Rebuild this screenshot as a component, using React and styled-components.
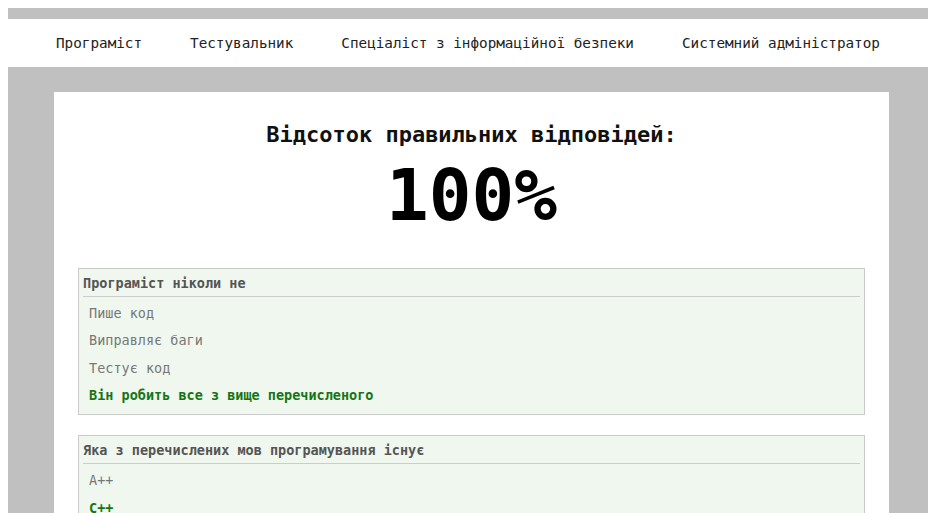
import React from 'react';
import styled, { createGlobalStyle } from 'styled-components';

const GlobalStyle = createGlobalStyle`
  body {
    margin: 8px 0 0 8px;
    background: #fff;
    font-family: "DejaVu Sans Mono", "Liberation Mono", monospace;
  }
`;

const Header = styled("header")`
  border-top: 11px solid #c0c0c0;
`;

const Nav = styled("nav")`
  height: 48px;
  display: flex;
  align-items: center;
  justify-content: space-evenly;
  background: #fff;
`;

const NavLink = styled("a")`
  font-size: 14.3px;
  color: #222;
  text-decoration: none;
  cursor: pointer;
`;

const Main = styled("main")`
  background: #c0c0c0;
  min-height: 460px;
  padding: 25px 39px 0 46px;
`;

const Card = styled("div")`
  background: #fff;
  padding: 30px 24px 20px;
`;

const Title = styled("h2")`
  margin: 0;
  text-align: center;
  font-size: 22px;
  font-weight: bold;
  color: #111;
`;

const Score = styled("div")`
  margin: 10px 0 33px;
  text-align: center;
  font-size: 71px;
  font-weight: bold;
  line-height: 1.1;
  color: #000;
`;

const Question = styled("div")`
  background: #eff7ef;
  border: 1px solid #cacaca;
  padding-bottom: 5px;
  margin-bottom: 20px;
`;

const Ask = styled("h3")`
  margin: 0 4px 3px;
  height: 27px;
  line-height: 28px;
  border-bottom: 1px solid #cccccc;
  font-size: 13.5px;
  font-weight: bold;
  color: #555;
`;

const Answer = styled("div")`
  padding-left: 10px;
  line-height: 27.3px;
  font-size: 13.5px;
  font-weight: ${p => (p.right ? "bold" : "normal")};
  color: ${p => (p.right ? "#157515" : "#777")};
`;

const jobs = [
  "Програміст",
  "Тестувальник",
  "Спеціаліст з інформаційної безпеки",
  "Системний адміністратор",
];

const questions = [
  {
    text: "Програміст ніколи не",
    answers: ["Пише код", "Виправляє баги", "Тестує код", "Він робить все з вище перечисленого"],
    right: 3,
  },
  {
    text: "Яка з перечислених мов програмування існує",
    answers: ["A++", "C++"],
    right: 1,
  },
];

const App = () => {
  return (
    <>
      <GlobalStyle />
      <Header>
        <Nav>
          {jobs.map(job => (
            <NavLink key={job}>{job}</NavLink>
          ))}
        </Nav>
      </Header>
      <Main>
        <Card>
          <Title>Відсоток правильних відповідей:</Title>
          <Score>100%</Score>
          {questions.map(q => (
            <Question key={q.text}>
              <Ask>{q.text}</Ask>
              {q.answers.map((a, i) => (
                <Answer key={a} right={i === q.right}>{a}</Answer>
              ))}
            </Question>
          ))}
        </Card>
      </Main>
    </>
  );
};

export default App;
